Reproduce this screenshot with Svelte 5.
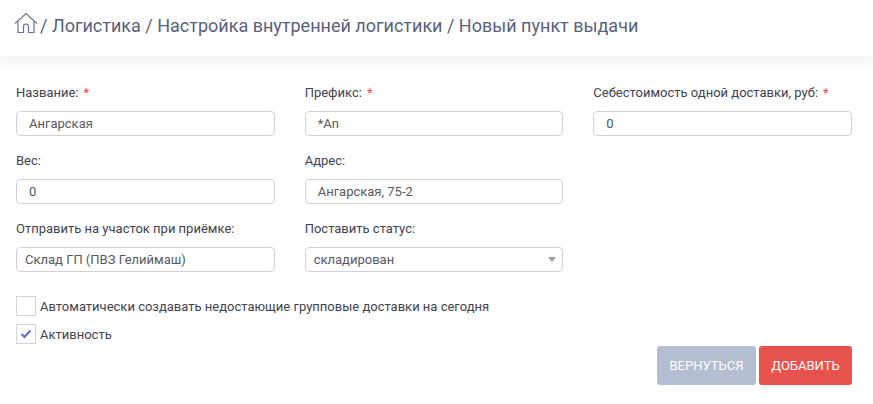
<script>
  const rows = [
    [
      { label: 'Название:', req: true, value: 'Ангарская' },
      { label: 'Префикс:', req: true, value: '*An' },
      { label: 'Себестоимость одной доставки, руб:', req: true, value: '0', num: true }
    ],
    [
      { label: 'Вес:', value: '0', num: true },
      { label: 'Адрес:', value: 'Ангарская, 75-2' }
    ],
    [
      { label: 'Отправить на участок при приёмке:', value: 'Склад ГП (ПВЗ Гелиймаш)', flush: true },
      { label: 'Поставить статус:', value: 'складирован', select: true }
    ]
  ];
</script>

<div class="page">
  <header class="top">
    <svg class="home" width="24" height="22" viewBox="0 0 24 22" fill="none" stroke="#6b7390" stroke-width="1.2">
      <path d="M1 11.5 12 1.5l11 10" />
      <path d="M4 9.5V20.5h5.5v-6a2.5 2.5 0 0 1 5 0v6H20V9.5" />
    </svg>
    <span class="crumbs">/ Логистика / Настройка внутренней логистики / Новый пункт выдачи</span>
  </header>

  <main class="form">
    {#each rows as row}
      <div class="row">
        {#each row as f}
          <div class="field">
            <div class="label">{f.label}{#if f.req}<span class="req">*</span>{/if}</div>
            <div class="input" class:num={f.num} class:flush={f.flush} class:sel={f.select}>
              <span>{f.value}</span>
              {#if f.select}<i class="caret"></i>{/if}
            </div>
          </div>
        {/each}
      </div>
    {/each}

    <div class="checks">
      <div class="check">
        <span class="box"></span>
        <span>Автоматически создавать недостающие групповые доставки на сегодня</span>
      </div>
      <div class="check">
        <span class="box">
          <svg width="12" height="10" viewBox="0 0 12 10" fill="none" stroke="#5b6bd0" stroke-width="2">
            <path d="M1.5 5 4.5 8 10.5 1.5" />
          </svg>
        </span>
        <span>Активность</span>
      </div>
    </div>

    <div class="actions">
      <button class="btn back">ВЕРНУТЬСЯ</button>
      <button class="btn add">ДОБАВИТЬ</button>
    </div>
  </main>
</div>

<style>
  :global(body) {
    margin: 0;
    background: #fff;
  }
  .page {
    width: 873px;
    height: 404px;
    overflow: hidden;
    font-family: Roboto, "Liberation Sans", sans-serif;
    font-size: 13px;
    color: #3f4254;
    background: #fff;
  }
  .top {
    height: 56px;
    box-sizing: border-box;
    padding: 12px 0 0 14px;
    display: flex;
    align-items: flex-start;
    gap: 2px;
    box-shadow: 0 4px 14px rgba(60, 60, 80, 0.07);
  }
  .home {
    flex: none;
  }
  .crumbs {
    font-size: 18px;
    line-height: 27px;
    color: #5a5f7d;
    white-space: nowrap;
  }
  .form {
    padding: 29px 21px 0 16px;
  }
  .row {
    display: grid;
    grid-template-columns: repeat(3, 258.67px);
    column-gap: 30px;
    margin-bottom: 17px;
  }
  .label {
    line-height: 16px;
    margin-bottom: 10px;
    white-space: nowrap;
  }
  .req {
    color: #f0424d;
    margin-left: 5px;
  }
  .input {
    height: 25px;
    box-sizing: border-box;
    border: 1px solid #cfd2dc;
    border-radius: 4px;
    padding: 0 12px;
    display: flex;
    align-items: center;
    justify-content: space-between;
    color: #575962;
  }
  .num {
    color: #3d5a78;
  }
  .flush,
  .sel {
    padding-left: 8px;
  }
  .sel {
    padding-right: 6px;
  }
  .caret {
    width: 0;
    height: 0;
    border-left: 4px solid transparent;
    border-right: 4px solid transparent;
    border-top: 5px solid #9a9ca5;
  }
  .checks {
    margin-top: 24px;
    display: flex;
    flex-direction: column;
    gap: 8px;
  }
  .check {
    display: flex;
    align-items: center;
    gap: 4px;
    height: 20px;
  }
  .box {
    width: 20px;
    height: 20px;
    box-sizing: border-box;
    border: 1px solid #d4d5db;
    display: flex;
    align-items: center;
    justify-content: center;
  }
  .actions {
    display: flex;
    justify-content: flex-end;
    gap: 3px;
    margin-top: 2px;
  }
  .btn {
    height: 39px;
    border: 0;
    border-radius: 3px;
    font-family: inherit;
    font-size: 13px;
    color: #fff;
    padding: 0;
  }
  .back {
    width: 99px;
    background: #b5bdd2;
  }
  .add {
    width: 93px;
    background: #e8524d;
  }
</style>
